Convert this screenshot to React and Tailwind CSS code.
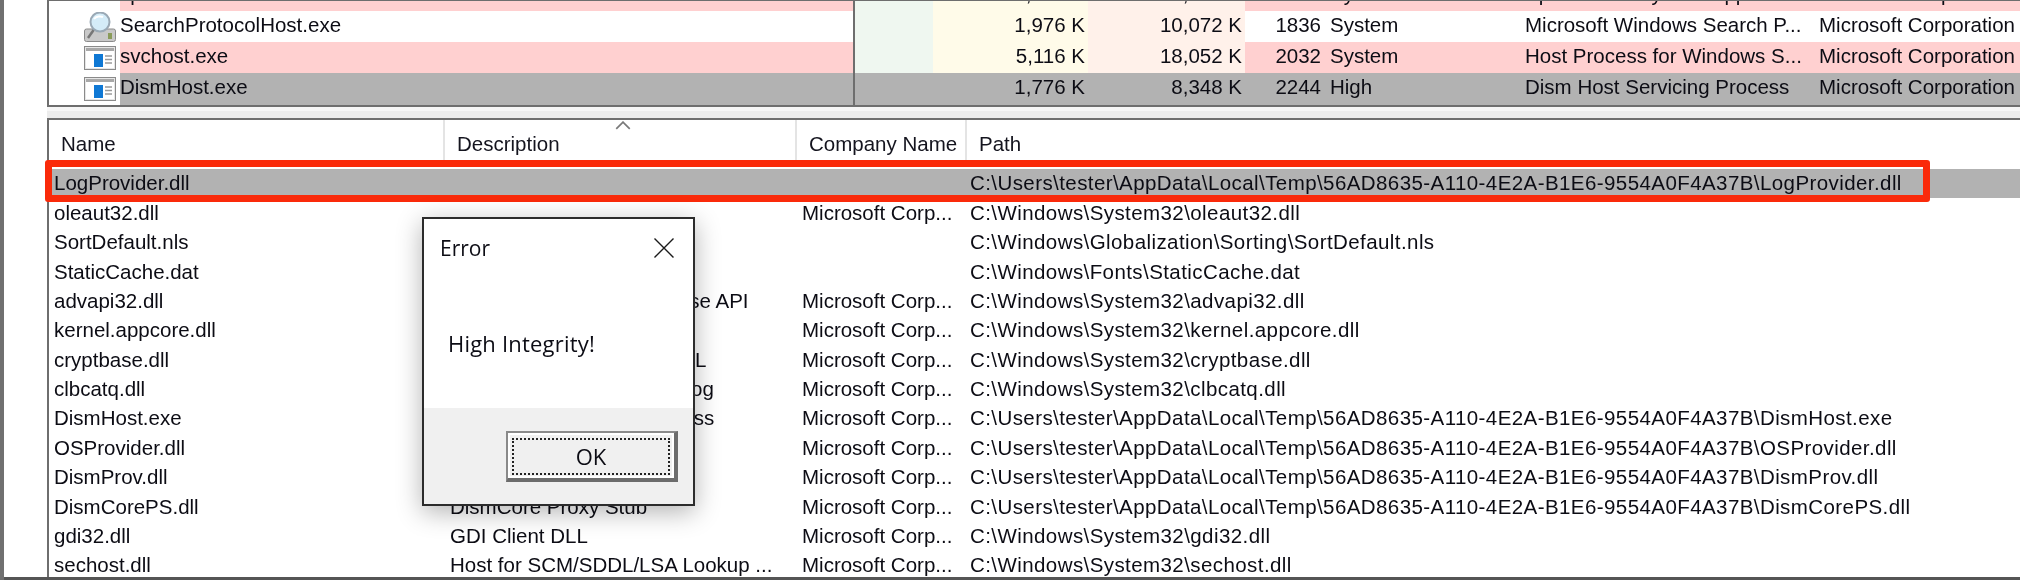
function WinIcon() {
  return (
    <svg viewBox="0 0 32 24" className="w-8 h-6">
      <rect x="0.500" y="0.500" width="31" height="23" fill="#e6e6e6" stroke="#8a8a8a" />
      <rect x="2" y="2" width="28" height="3" fill="#a8a8a8" />
      <rect x="2" y="5" width="28" height="17" fill="#ffffff" />
      <rect x="10" y="8" width="9" height="13" fill="#0f78d4" />
      <path d="M21 10h7M21 13.500h7M21 17h7" stroke="#9a9a9a" strokeWidth="1.400" />
    </svg>
  );
}

function SearchIcon() {
  return (
    <svg viewBox="0 0 32 30" className="w-8 h-[30px]">
      <rect x="0.500" y="17" width="31" height="12.500" rx="2" fill="#c9c9c9" stroke="#8b8b8b" />
      <rect x="24" y="21" width="4" height="6" fill="#8a9b5a" />
      <path d="M4 26 11 16" stroke="#777777" strokeWidth="2.500" />
      <circle cx="16" cy="10" r="9.500" fill="#d4ecf8" stroke="#9aa9b5" strokeWidth="2" />
      <path d="M10 7c2-3 7-3 9-2" stroke="#ffffff" strokeWidth="2" fill="none" />
    </svg>
  );
}

function PrinterIcon() {
  return (
    <svg viewBox="0 0 32 12" className="w-8 h-3">
      <rect x="1" y="0" width="30" height="5" fill="#c9ccd0" stroke="#8a8a8a" />
      <rect x="10" y="0" width="12" height="11" fill="#e8eef4" stroke="#8a8a8a" />
      <rect x="13" y="3" width="6" height="6" fill="#2c6fb5" />
    </svg>
  );
}

const procs = [
  { name: "spoolsv.exe", pb: "5,312 K", ws: "12,748 K", pid: "1796", il: "System", desc: "Spooler SubSystem App", co: "Microsoft Corporation", bg: "bg-[#ffd0d0]", icon: <PrinterIcon />, clip: true },
  { name: "SearchProtocolHost.exe", pb: "1,976 K", ws: "10,072 K", pid: "1836", il: "System", desc: "Microsoft Windows Search P...", co: "Microsoft Corporation", bg: "bg-white", icon: <SearchIcon /> },
  { name: "svchost.exe", pb: "5,116 K", ws: "18,052 K", pid: "2032", il: "System", desc: "Host Process for Windows S...", co: "Microsoft Corporation", bg: "bg-[#ffd0d0]", icon: <WinIcon /> },
  { name: "DismHost.exe", pb: "1,776 K", ws: "8,348 K", pid: "2244", il: "High", desc: "Dism Host Servicing Process", co: "Microsoft Corporation", bg: "bg-[#b2b2b2]", icon: <WinIcon />, sel: true },
];

const temp = "C:\\Users\\tester\\AppData\\Local\\Temp\\56AD8635-A110-4E2A-B1E6-9554A0F4A37B\\";
const mods = [
  ["LogProvider.dll", "", "", temp + "LogProvider.dll"],
  ["oleaut32.dll", "", "Microsoft Corp...", "C:\\Windows\\System32\\oleaut32.dll"],
  ["SortDefault.nls", "", "", "C:\\Windows\\Globalization\\Sorting\\SortDefault.nls"],
  ["StaticCache.dat", "", "", "C:\\Windows\\Fonts\\StaticCache.dat"],
  ["advapi32.dll", "Advanced Windows 32 Base API", "Microsoft Corp...", "C:\\Windows\\System32\\advapi32.dll"],
  ["kernel.appcore.dll", "AppModel API Host", "Microsoft Corp...", "C:\\Windows\\System32\\kernel.appcore.dll"],
  ["cryptbase.dll", "Base cryptographic API DLL", "Microsoft Corp...", "C:\\Windows\\System32\\cryptbase.dll"],
  ["clbcatq.dll", "COM+ Configuration Catalog", "Microsoft Corp...", "C:\\Windows\\System32\\clbcatq.dll"],
  ["DismHost.exe", "Dism Host Servicing Process", "Microsoft Corp...", temp + "DismHost.exe"],
  ["OSProvider.dll", "Dism OS Provider", "Microsoft Corp...", temp + "OSProvider.dll"],
  ["DismProv.dll", "Dism Provider", "Microsoft Corp...", temp + "DismProv.dll"],
  ["DismCorePS.dll", "DismCore Proxy Stub", "Microsoft Corp...", temp + "DismCorePS.dll"],
  ["gdi32.dll", "GDI Client DLL", "Microsoft Corp...", "C:\\Windows\\System32\\gdi32.dll"],
  ["sechost.dll", "Host for SCM/SDDL/LSA Lookup ...", "Microsoft Corp...", "C:\\Windows\\System32\\sechost.dll"],
];

function ProcRow({ p }) {
  return (
    <div className={`flex shrink-0 h-[31.2px] items-center ${p.clip ? "-mt-[21.2px]" : ""}`}>
      <div className="w-[71px] h-full pl-[35px] bg-white flex items-center shrink-0 overflow-hidden">{p.icon}</div>
      <div className={`flex h-full flex-1 items-center ${p.bg}`}>
        <div className="w-[733px] shrink-0 whitespace-nowrap pb-[3px]">{p.name}</div>
        <div className="w-[2px] h-full shrink-0 bg-[#6e6e6e]" />
        <div className={`w-[78px] h-full shrink-0 ${p.sel ? "" : "bg-[#eff7f0]"}`} />
        <div className={`w-[155px] h-full shrink-0 flex items-center justify-end pr-[3px] pb-[3px] ${p.sel ? "" : "bg-[#fffbe9]"}`}>{p.pb}</div>
        <div className={`w-[157px] h-full shrink-0 flex items-center justify-end pr-[3px] pb-[3px] ${p.sel ? "" : "bg-[#fff1ea]"}`}>{p.ws}</div>
        <div className="w-[76px] shrink-0 text-right pb-[3px]">{p.pid}</div>
        <div className="w-[204px] shrink-0 pl-[9px] pb-[3px]">{p.il}</div>
        <div className="w-[294px] shrink-0 whitespace-nowrap pb-[3px]">{p.desc}</div>
        <div className="whitespace-nowrap pb-[3px]">{p.co}</div>
      </div>
    </div>
  );
}

function ModRow({ m, sel }) {
  return (
    <div className={`flex shrink-0 h-[29.4px] items-center ${sel ? "bg-[#b2b2b2]" : ""}`}>
      <div className="w-[396px] pl-[5px] shrink-0 whitespace-nowrap overflow-hidden">{m[0]}</div>
      <div className="w-[352px] pl-[5px] shrink-0 whitespace-nowrap overflow-hidden">{m[1]}</div>
      <div className="w-[170px] pl-[5px] shrink-0 whitespace-nowrap overflow-hidden">{m[2]}</div>
      <div className="pl-[3px] whitespace-nowrap tracking-[0.42px]">{m[3]}</div>
    </div>
  );
}

function HeaderCell({ w, children }) {
  return (
    <div className={`${w} h-full shrink-0 flex items-center pl-[12px] pt-[9px] border-r-2 border-[#e4e4e4] whitespace-nowrap`}>
      {children}
    </div>
  );
}

export default function App() {
  return (
    <div className="relative w-[2020px] h-[580px] overflow-hidden bg-white flex font-['Liberation_Sans',Arial,sans-serif] text-[20.5px] text-[#0c0c14] blur-[0.4px]">
      <div className="w-1 shrink-0 bg-[#707070]" />
      <div className="flex-1 flex flex-col pl-[43px] min-w-0">
        <div className="h-[105px] shrink-0 flex flex-col overflow-hidden border-l-2 border-t border-[#6e6e6e]">
          <ProcRow p={procs[0]} />
          <ProcRow p={procs[1]} />
          <ProcRow p={procs[2]} />
          <ProcRow p={procs[3]} />
        </div>
        <div className="h-[2px] shrink-0 bg-[#6e6e6e]" />
        <div className="h-[11px] shrink-0 flex flex-col bg-white">
          <div className="h-1 bg-[#f6f6f6]" />
          <div className="flex-1 bg-[#ececec]" />
        </div>
        <div className="h-[2px] shrink-0 bg-[#6e6e6e]" />
        <div className="flex-1 min-h-0 flex flex-col border-l-2 border-[#6e6e6e] overflow-hidden">
          <div className="relative h-[40px] shrink-0 flex text-[#14141e]">
            <HeaderCell w="w-[396px]">Name</HeaderCell>
            <HeaderCell w="w-[352px]">Description</HeaderCell>
            <HeaderCell w="w-[170px]">Company Name</HeaderCell>
            <div className="flex-1 h-full flex items-center pl-[12px] pt-[9px]">Path</div>
            <svg viewBox="0 0 14 8" className="absolute left-[566px] top-[1px] w-[16px] h-[9px]">
              <path d="M1 7 7 1l6 6" fill="none" stroke="#7a7a7a" strokeWidth="1.500" />
            </svg>
          </div>
          <div className="flex flex-col pt-[9px]">
            {mods.map((m, i) => <ModRow key={m[0]} m={m} sel={i === 0} />)}
          </div>
        </div>
        <div className="h-[3px] shrink-0 bg-[#555555] -ml-[43px]" />
      </div>

      <div className="absolute left-[45px] top-[160px] w-[1885px] h-[42px] border-[7px] border-[#fa2a0a] rounded-[3px]" />

      <div className="absolute left-[422px] top-[217px] w-[273px] h-[289px] flex flex-col bg-white border-2 border-[#2c2c2c] shadow-[0_6px_24px_rgba(0,0,0,0.3)] font-['Open_Sans',sans-serif]">
        <div className="flex-1 flex flex-col">
          <div className="flex items-center justify-between pl-[16px] pr-[19px] pt-[15px] text-[21px] leading-[28px]">
            <span>Error</span>
            <svg viewBox="0 0 20 20" className="w-5 h-5">
              <path d="M0.500 0.500 19.500 19.500M19.500 0.500 0.500 19.500" stroke="#1a1a1a" strokeWidth="1.400" />
            </svg>
          </div>
          <div className="pl-[24px] pt-[67px] text-[22px] leading-[28px] tracking-[0.2px]">High Integrity!</div>
        </div>
        <div className="h-[96px] shrink-0 bg-[#f0f0f0] flex justify-end pt-[23px] pr-[15px]">
          <div className="w-[172px] h-[51px] p-[4px] bg-[#f0f0f0] border-2 border-[#8a8a8a] border-r-[4px] border-b-[4px] border-r-[#6c6c6c] border-b-[#6c6c6c] shadow-[inset_0_0_0_2px_#ffffff]">
            <div className="w-full h-full mt-[1px] border-2 border-dotted border-[#222222] flex items-center justify-center text-[22px]">OK</div>
          </div>
        </div>
      </div>
    </div>
  );
}
